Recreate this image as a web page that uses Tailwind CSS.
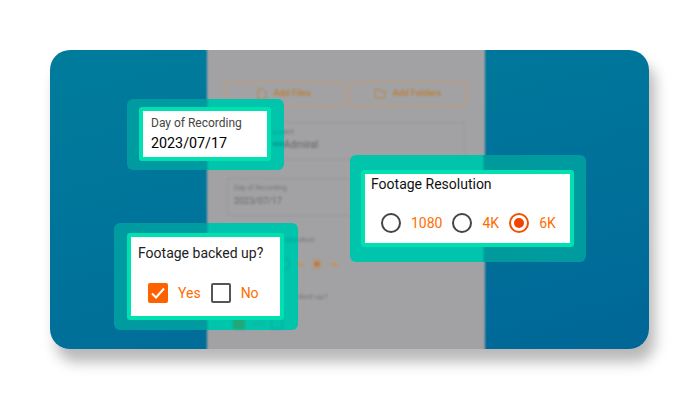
<!DOCTYPE html>
<html lang="en">
<head>
    <meta charset="UTF-8">
    <title>Footage form fields</title>
    <script src="https://cdn.jsdelivr.net/npm/@tailwindcss/browser@4"></script>
</head>
<body class="bg-white w-[700px] h-[400px] overflow-hidden pt-[50px] pl-[50px] font-['Roboto',sans-serif]">
    <div class="relative w-[599px] h-[299px] rounded-[20px] shadow-[6px_13px_14px_rgba(0,0,0,0.28)]">
        <!-- blurred app behind the callouts -->
        <div class="w-full h-full rounded-[20px] overflow-hidden bg-[linear-gradient(165deg,#007c9b_0%,#00729a_55%,#006697_100%)]">
            <div class="ml-[157px] -mt-[4px] w-[278px] h-[307px] bg-[#a2a2a5] px-[18px] pt-[35px] blur-[1.2px]">
                <div class="flex gap-[5px]">
                    <div class="flex-1 h-[25px] border border-[#c29a6c] rounded-[2px] flex items-center justify-center gap-[6px] text-[9px] font-bold text-[#b98440]">
                        <svg width="10" height="12" viewBox="0 0 10 12" fill="none" stroke="#b98440"><path d="M1 1h5l3 3v7H1z"/></svg>
                        <span>Add Files</span>
                    </div>
                    <div class="flex-1 h-[25px] border border-[#c29a6c] rounded-[2px] flex items-center justify-center gap-[6px] text-[9px] font-bold text-[#b98440]">
                        <svg width="12" height="11" viewBox="0 0 12 11" fill="none" stroke="#b98440"><path d="M1 1h4l1 2h5v7H1z"/></svg>
                        <span>Add Folders</span>
                    </div>
                </div>
                <div class="mt-[16px] ml-[2px] w-[238px] h-[38px] border border-[#98989b] px-[6px] pt-[5px] text-[#77777a]">
                    <div class="text-[7px] leading-[9px] ml-[38px]">Project</div>
                    <div class="text-[10px] leading-[12px] mt-[2px] ml-[27px] text-[#666669]">Rear Admiral</div>
                </div>
                <div class="mt-[18px] ml-[2px] w-[238px] h-[38px] border border-[#98989b] px-[6px] pt-[5px] text-[#77777a]">
                    <div class="text-[7px] leading-[9px]">Day of Recording</div>
                    <div class="text-[9px] leading-[12px] mt-[2px] text-[#6a6a6d]">2023/07/17</div>
                </div>
                <div class="mt-[19px] ml-[52px] h-[10px] text-[8px] leading-[10px] text-[#77777a]">Resolution</div>
                <div class="mt-[13px] ml-[52px] flex items-center gap-[7px]">
                    <span class="w-[12px] h-[12px] rounded-full border border-[#88888b]"></span>
                    <span class="w-[8px] h-[3px] bg-[#c09468]"></span>
                    <span class="w-[12px] h-[12px] rounded-full border border-[#c09468] flex items-center justify-center"><span class="w-[6px] h-[6px] rounded-full bg-[#c07a3c]"></span></span>
                    <span class="w-[8px] h-[3px] bg-[#c09468]"></span>
                </div>
                <div class="mt-[22px] ml-[62px] h-[10px] text-[8px] leading-[10px] text-[#77777a]">backed up?</div>
                <div class="mt-[15px] ml-[8px] flex items-center gap-[7px]">
                    <span class="w-[12px] h-[12px] bg-[#2f9a5c]"></span>
                    <span class="w-[12px] h-[3px] bg-[#98a08c]"></span>
                    <span class="w-[12px] h-[12px] border border-[#88888b]"></span>
                    <span class="w-[6px] h-[3px] bg-[#b09a78]"></span>
                </div>
            </div>
        </div>

        <!-- Day of Recording -->
        <div class="absolute left-[77px] top-[49px] w-[157px] h-[71px] rounded-[6px] pl-[12px] pt-[8px] bg-[linear-gradient(90deg,#009ba0_79px,#00c4ac_82px)]">
            <!-- app showing through the teal -->
            <span class="absolute left-[145px] top-[32px] w-[12px] h-[3px] bg-[#00b4a6] blur-[1px]"></span>
            <span class="absolute left-[145px] top-[43px] w-[12px] h-[4px] bg-[#00a89e] blur-[1px]"></span>
            <div class="relative w-[132px] h-[54px] border-[4px] border-[#00e0b0] rounded-[3px] bg-white pl-[8px] pt-[4px]">
                <div class="text-[12px] leading-[16px] text-[#444]">Day of Recording</div>
                <div class="text-[14.3px] leading-[20px] mt-[2px] text-black">2023/07/17</div>
            </div>
        </div>

        <!-- Footage Resolution -->
        <div class="absolute left-[300px] top-[105px] w-[236px] h-[107px] rounded-[6px] pl-[11px] pt-[15px] bg-[linear-gradient(90deg,#00c4ac_132px,#009a9c_135px,#009b9f_100%)]">
            <div class="w-[213px] h-[77px] border-[4px] border-[#00e0b0] rounded-[3px] bg-white pl-[6px] pt-[1px]">
                <div class="text-[14px] leading-[18px] text-[#111]">Footage Resolution</div>
                <div class="mt-[20px] ml-[10px] flex items-center gap-[10px] text-[14px] leading-[20px] text-[#ff6d00]">
                    <span class="w-[20px] h-[20px] rounded-full border-2 border-[#444]"></span>
                    <span>1080</span>
                    <span class="w-[20px] h-[20px] rounded-full border-2 border-[#444]"></span>
                    <span>4K</span>
                    <span class="w-[20px] h-[20px] rounded-full border-2 border-[#f25000] flex items-center justify-center">
                        <span class="w-[10px] h-[10px] rounded-full bg-[#f04300]"></span>
                    </span>
                    <span>6K</span>
                </div>
            </div>
        </div>

        <!-- Footage backed up? -->
        <div class="absolute left-[64px] top-[173px] w-[184px] h-[107px] rounded-[6px] pl-[13px] pt-[10px] bg-[linear-gradient(90deg,#009ba0_92px,#00c4ac_95px)]">
            <!-- app showing through the teal -->
            <span class="absolute left-[171px] top-[15px] w-[12px] h-[4px] bg-[#00b4a6] blur-[1px]"></span>
            <span class="absolute left-[164px] top-[35px] w-[12px] h-[12px] rounded-full border border-[#00aca2] blur-[1px]"></span>
            <span class="absolute left-[119px] top-[94px] w-[12px] h-[12px] bg-[#22a878] blur-[1px]"></span>
            <span class="absolute left-[138px] top-[99px] w-[12px] h-[3px] bg-[#10b8a0] blur-[1px]"></span>
            <span class="absolute left-[157px] top-[94px] w-[12px] h-[12px] border border-[#10a8a0] blur-[1px]"></span>
            <div class="relative w-[157px] h-[87px] border-[4px] border-[#00e0b0] rounded-[3px] bg-white pl-[7px] pt-[7px]">
                <div class="text-[14px] leading-[18px] text-[#222]">Footage backed up?</div>
                <div class="mt-[21px] ml-[10px] flex items-center gap-[10px] text-[14px] leading-[20px] text-[#ff6d00]">
                    <span class="w-[20px] h-[20px] rounded-[2px] bg-[#ff6000] flex items-center justify-center">
                        <svg width="14" height="12" viewBox="0 0 14 12" fill="none" stroke="white" stroke-width="2"><path d="M1 6.5l4 4 8-9"/></svg>
                    </span>
                    <span>Yes</span>
                    <span class="w-[20px] h-[20px] rounded-[2px] border-2 border-[#555]"></span>
                    <span>No</span>
                </div>
            </div>
        </div>
    </div>
</body>
</html>
